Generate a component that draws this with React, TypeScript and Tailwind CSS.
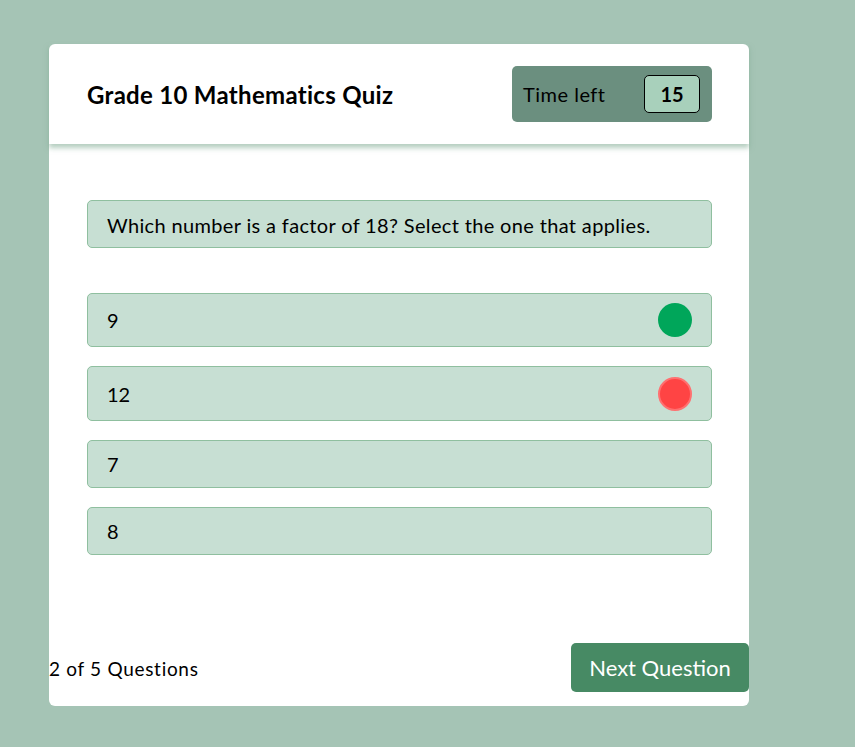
const options = [
  { label: "9", mark: "correct", h: "h-[54px]" },
  { label: "12", mark: "wrong", h: "h-[55px]" },
  { label: "7", mark: null, h: "h-[48px]" },
  { label: "8", mark: null, h: "h-[48px]" },
];

export default function App() {
  return (
    <div className="min-h-[747px] w-full bg-[#a5c4b5] pl-[49px] pt-[44px] font-['Lato',sans-serif] text-black">
      <div className="flex h-[662px] w-[700px] flex-col rounded-[6px] bg-white">
        {/* Header */}
        <div className="flex h-[100px] items-center justify-between pl-[38px] pr-[37px] shadow-[0_4px_5px_rgba(120,165,140,0.55)]">
          <h1 className="mt-[2px] text-[24px] font-bold tracking-[0.3px]">Grade 10 Mathematics Quiz</h1>
          <div className="flex h-[56px] w-[200px] items-center justify-between rounded-[5px] bg-[#6b8f7f] pl-[11px] pr-[12px]">
            <span className="text-[20px] tracking-[0.5px]">Time left</span>
            <span className="flex h-[38px] w-[56px] items-center justify-center rounded-[5px] border border-black bg-[#a8d0bb] text-[20px] font-bold">
              15
            </span>
          </div>
        </div>

        {/* Body */}
        <div className="flex flex-col pl-[38px] pr-[37px] pt-[56px]">
          <div className="flex h-[48px] items-center rounded-[5px] border border-[#8fbf9f] bg-[#c7dfd3] px-[19px] pt-[1px] text-[20px] tracking-[0.35px]">
            Which number is a factor of 18? Select the one that applies.
          </div>

          <div className="mt-[45px] flex flex-col gap-[19px]">
            {options.map((o) => (
              <div
                key={o.label}
                className={`flex items-center justify-between rounded-[5px] border border-[#8fbf9f] bg-[#c7dfd3] pl-[19px] pr-[19px] text-[20px] ${o.h}`}
              >
                <span>{o.label}</span>
                {o.mark === "correct" && <span className="h-[34px] w-[34px] rounded-full bg-[#00a65a]" />}
                {o.mark === "wrong" && (
                  <span className="h-[34px] w-[34px] rounded-full border-2 border-[#ff7070] bg-[#ff4444]" />
                )}
              </div>
            ))}
          </div>
        </div>

        {/* Footer */}
        <div className="mt-auto mb-[14px] flex items-center justify-between">
          <span className="pt-[3px] text-[19px] tracking-[0.7px]">2 of 5 Questions</span>
          <button className="h-[49px] w-[178px] rounded-[5px] bg-[#478a64] text-[22px] text-white">Next Question</button>
        </div>
      </div>
    </div>
  );
}
